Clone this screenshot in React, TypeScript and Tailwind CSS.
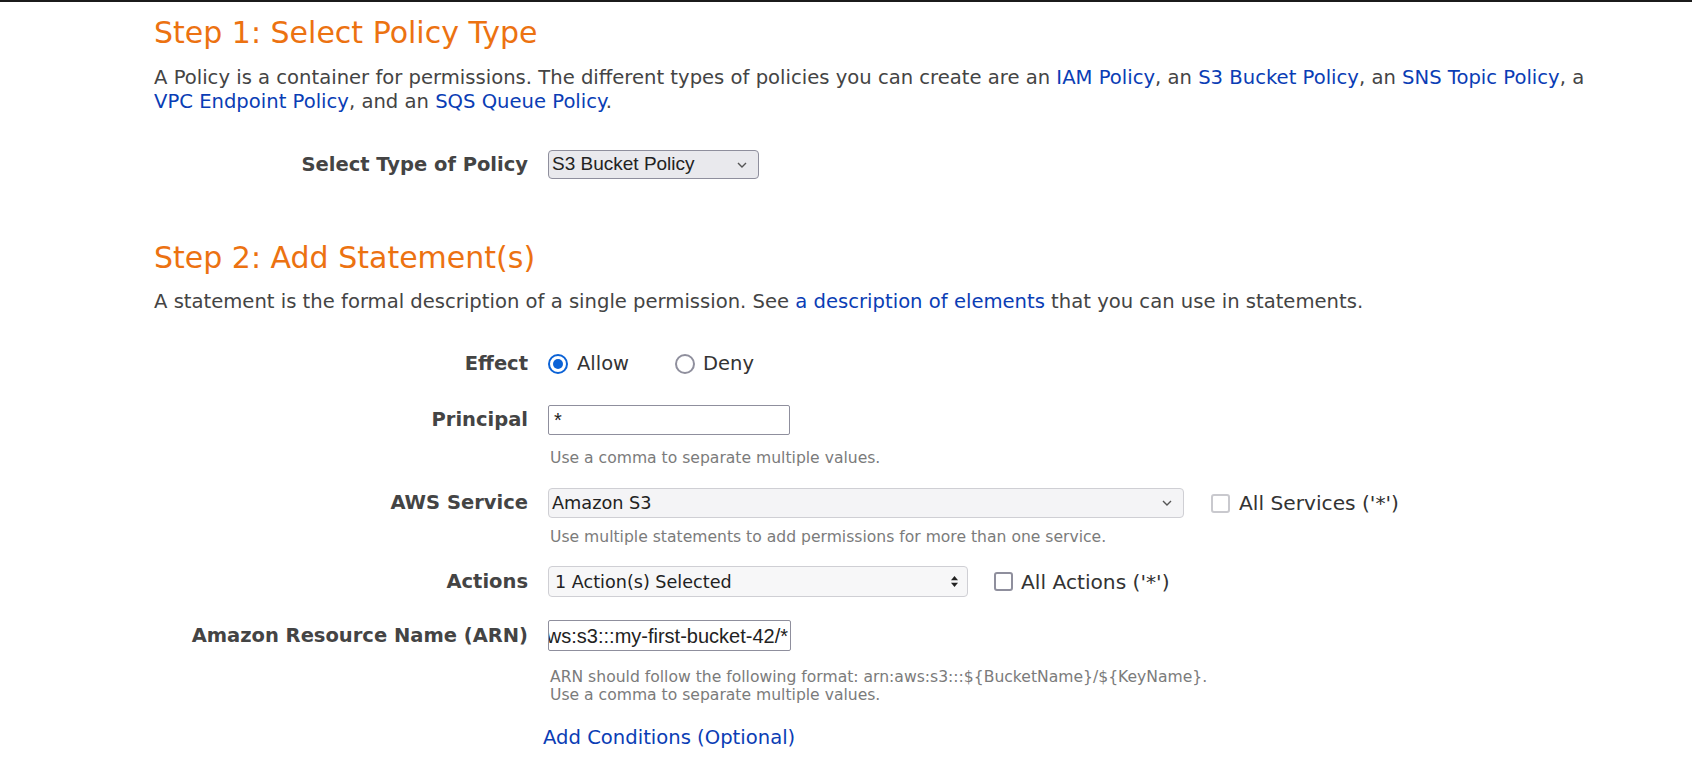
import React from "react";

const verdana = { fontFamily: '"DejaVu Sans", Verdana, sans-serif' };
const arial = { fontFamily: '"Liberation Sans", Arial, sans-serif' };

function Chevron() {
  return (
    <svg width="12" height="8" viewBox="0 0 12 8" className="shrink-0">
      <path d="M2 2 L6 6 L10 2" fill="none" stroke="#555" strokeWidth="1.4" />
    </svg>
  );
}

function UpDown() {
  return (
    <svg width="9" height="13" viewBox="0 0 9 13" className="shrink-0">
      <path d="M4.5 1 L8 5.2 L1 5.2 Z" fill="#222" />
      <path d="M4.5 12 L8 7.8 L1 7.8 Z" fill="#222" />
    </svg>
  );
}

function Radio({ checked }: { checked: boolean }) {
  return checked ? (
    <span className="flex h-[20px] w-[20px] shrink-0 items-center justify-center rounded-full border-[2px] border-[#0b62d6] bg-white">
      <span className="block h-[10px] w-[10px] rounded-full bg-[#0b62d6]" />
    </span>
  ) : (
    <span className="block h-[20px] w-[20px] shrink-0 rounded-full border-[2px] border-[#8f8f9d] bg-white" />
  );
}

function Check({ light }: { light?: boolean }) {
  return (
    <span
      className={
        light
          ? "block h-[19px] w-[19px] shrink-0 rounded-[3px] border-[2px] border-[#c9c9ce] bg-white"
          : "block h-[19px] w-[19px] shrink-0 rounded-[3px] border-[2px] border-[#8f8f9d] bg-white"
      }
    />
  );
}

export default function App() {
  return (
    <div className="min-h-[757px] w-full border-t-[2px] border-[#1b1b1b] bg-white text-[#444]" style={verdana}>
      <div className="pl-[154px]">
        <h1 className="mt-[13px] whitespace-nowrap text-[30px] leading-[36px] text-[#ec7211]">Step 1: Select Policy Type</h1>
        <p className="mt-[15px] whitespace-nowrap text-[19.6px] leading-[24px]">
          A Policy is a container for permissions. The different types of policies you can create are an{" "}
          <a className="text-[#0a3db5]">IAM Policy</a>, an <a className="text-[#0a3db5]">S3 Bucket Policy</a>, an{" "}
          <a className="text-[#0a3db5]">SNS Topic Policy</a>, a
          <br />
          <a className="text-[#0a3db5]">VPC Endpoint Policy</a>, and an <a className="text-[#0a3db5]">SQS Queue Policy</a>.
        </p>

        <div className="mt-[36px] grid grid-cols-[374px_1fr] gap-x-[20px]">
          <div className="flex h-[29px] items-center justify-end whitespace-nowrap text-[19.5px] font-bold">Select Type of Policy</div>
          <div
            className="flex h-[29px] w-[211px] items-center justify-between rounded-[4px] border border-[#8f8f9d] bg-[#e9e9ed] pl-[3px] pr-[10px] text-[19px] text-[#222]"
            style={arial}
          >
            <span>S3 Bucket Policy</span>
            <Chevron />
          </div>
        </div>

        <h2 className="mt-[61px] whitespace-nowrap text-[30px] leading-[36px] text-[#ec7211]">Step 2: Add Statement(s)</h2>
        <p className="mt-[14px] whitespace-nowrap text-[19.6px] leading-[24px]">
          A statement is the formal description of a single permission. See{" "}
          <a className="text-[#0a3db5]">a description of elements</a> that you can use in statements.
        </p>

        <div className="mt-[38px] grid grid-cols-[374px_1fr] gap-x-[20px]">
          {/* Effect */}
          <div className="flex h-[24px] items-center justify-end text-[19.5px] font-bold">Effect</div>
          <div className="flex h-[24px] items-center text-[19.5px] text-[#333]">
            <Radio checked />
            <span className="ml-[9px]">Allow</span>
            <span className="ml-[46px]">
              <Radio checked={false} />
            </span>
            <span className="ml-[8px]">Deny</span>
          </div>

          {/* Principal */}
          <div className="mt-[29px] flex h-[30px] items-center justify-end text-[19.5px] font-bold">Principal</div>
          <div className="mt-[29px]">
            <div
              className="flex h-[30px] w-[242px] items-center rounded-[2px] border border-[#8f8f9d] bg-white pl-[5px] text-[20px] text-[#222]"
              style={arial}
            >
              *
            </div>
            <div className="mt-[14px] whitespace-nowrap pl-[2px] text-[15.6px] leading-[18px] text-[#7b7b7b]">
              Use a comma to separate multiple values.
            </div>
          </div>

          {/* AWS Service */}
          <div className="mt-[21px] flex h-[30px] items-center justify-end text-[19.5px] font-bold">AWS Service</div>
          <div className="mt-[21px]">
            <div className="flex items-center">
              <div className="flex h-[30px] w-[636px] items-center justify-between rounded-[4px] border border-[#cfcfd4] bg-[#f4f4f6] pl-[3px] pr-[10px] text-[17.7px] text-[#222]">
                <span>Amazon S3</span>
                <Chevron />
              </div>
              <span className="ml-[27px]">
                <Check light />
              </span>
              <span className="ml-[9px] whitespace-nowrap text-[20.2px] text-[#333]">All Services ('*')</span>
            </div>
            <div className="mt-[10px] whitespace-nowrap pl-[2px] text-[15.6px] leading-[18px] text-[#7b7b7b]">
              Use multiple statements to add permissions for more than one service.
            </div>
          </div>

          {/* Actions */}
          <div className="mt-[20px] flex h-[31px] items-center justify-end text-[19.5px] font-bold">Actions</div>
          <div className="mt-[20px] flex items-center">
            <div className="flex h-[31px] w-[420px] items-center justify-between rounded-[4px] border border-[#cfcfd4] bg-[#f7f7f8] pl-[6px] pr-[8px] text-[17.6px] text-[#222]">
              <span>1 Action(s) Selected</span>
              <UpDown />
            </div>
            <span className="ml-[26px]">
              <Check />
            </span>
            <span className="ml-[8px] whitespace-nowrap text-[20.2px] text-[#333]">All Actions ('*')</span>
          </div>

          {/* ARN */}
          <div className="mt-[23px] flex h-[31px] items-center justify-end whitespace-nowrap text-[19.5px] font-bold">
            Amazon Resource Name (ARN)
          </div>
          <div className="mt-[23px]">
            <div
              className="flex h-[31px] w-[243px] items-center justify-end overflow-hidden whitespace-nowrap rounded-[2px] border border-[#8f8f9d] bg-white pr-[2px] text-[20px] text-[#222]"
              style={arial}
            >
              <span>arn:aws:s3:::my-first-bucket-42/*</span>
            </div>
            <div className="mt-[17px] whitespace-nowrap pl-[2px] text-[15.6px] leading-[18px] text-[#7b7b7b]">
              ARN should follow the following format: arn:aws:s3:::$&#123;BucketName&#125;/$&#123;KeyName&#125;.
              <br />
              Use a comma to separate multiple values.
            </div>
            <div className="-ml-[5px] mt-[22px] whitespace-nowrap text-[19.6px] leading-[24px] text-[#0a3db5]">Add Conditions (Optional)</div>
          </div>
        </div>
      </div>
    </div>
  );
}
